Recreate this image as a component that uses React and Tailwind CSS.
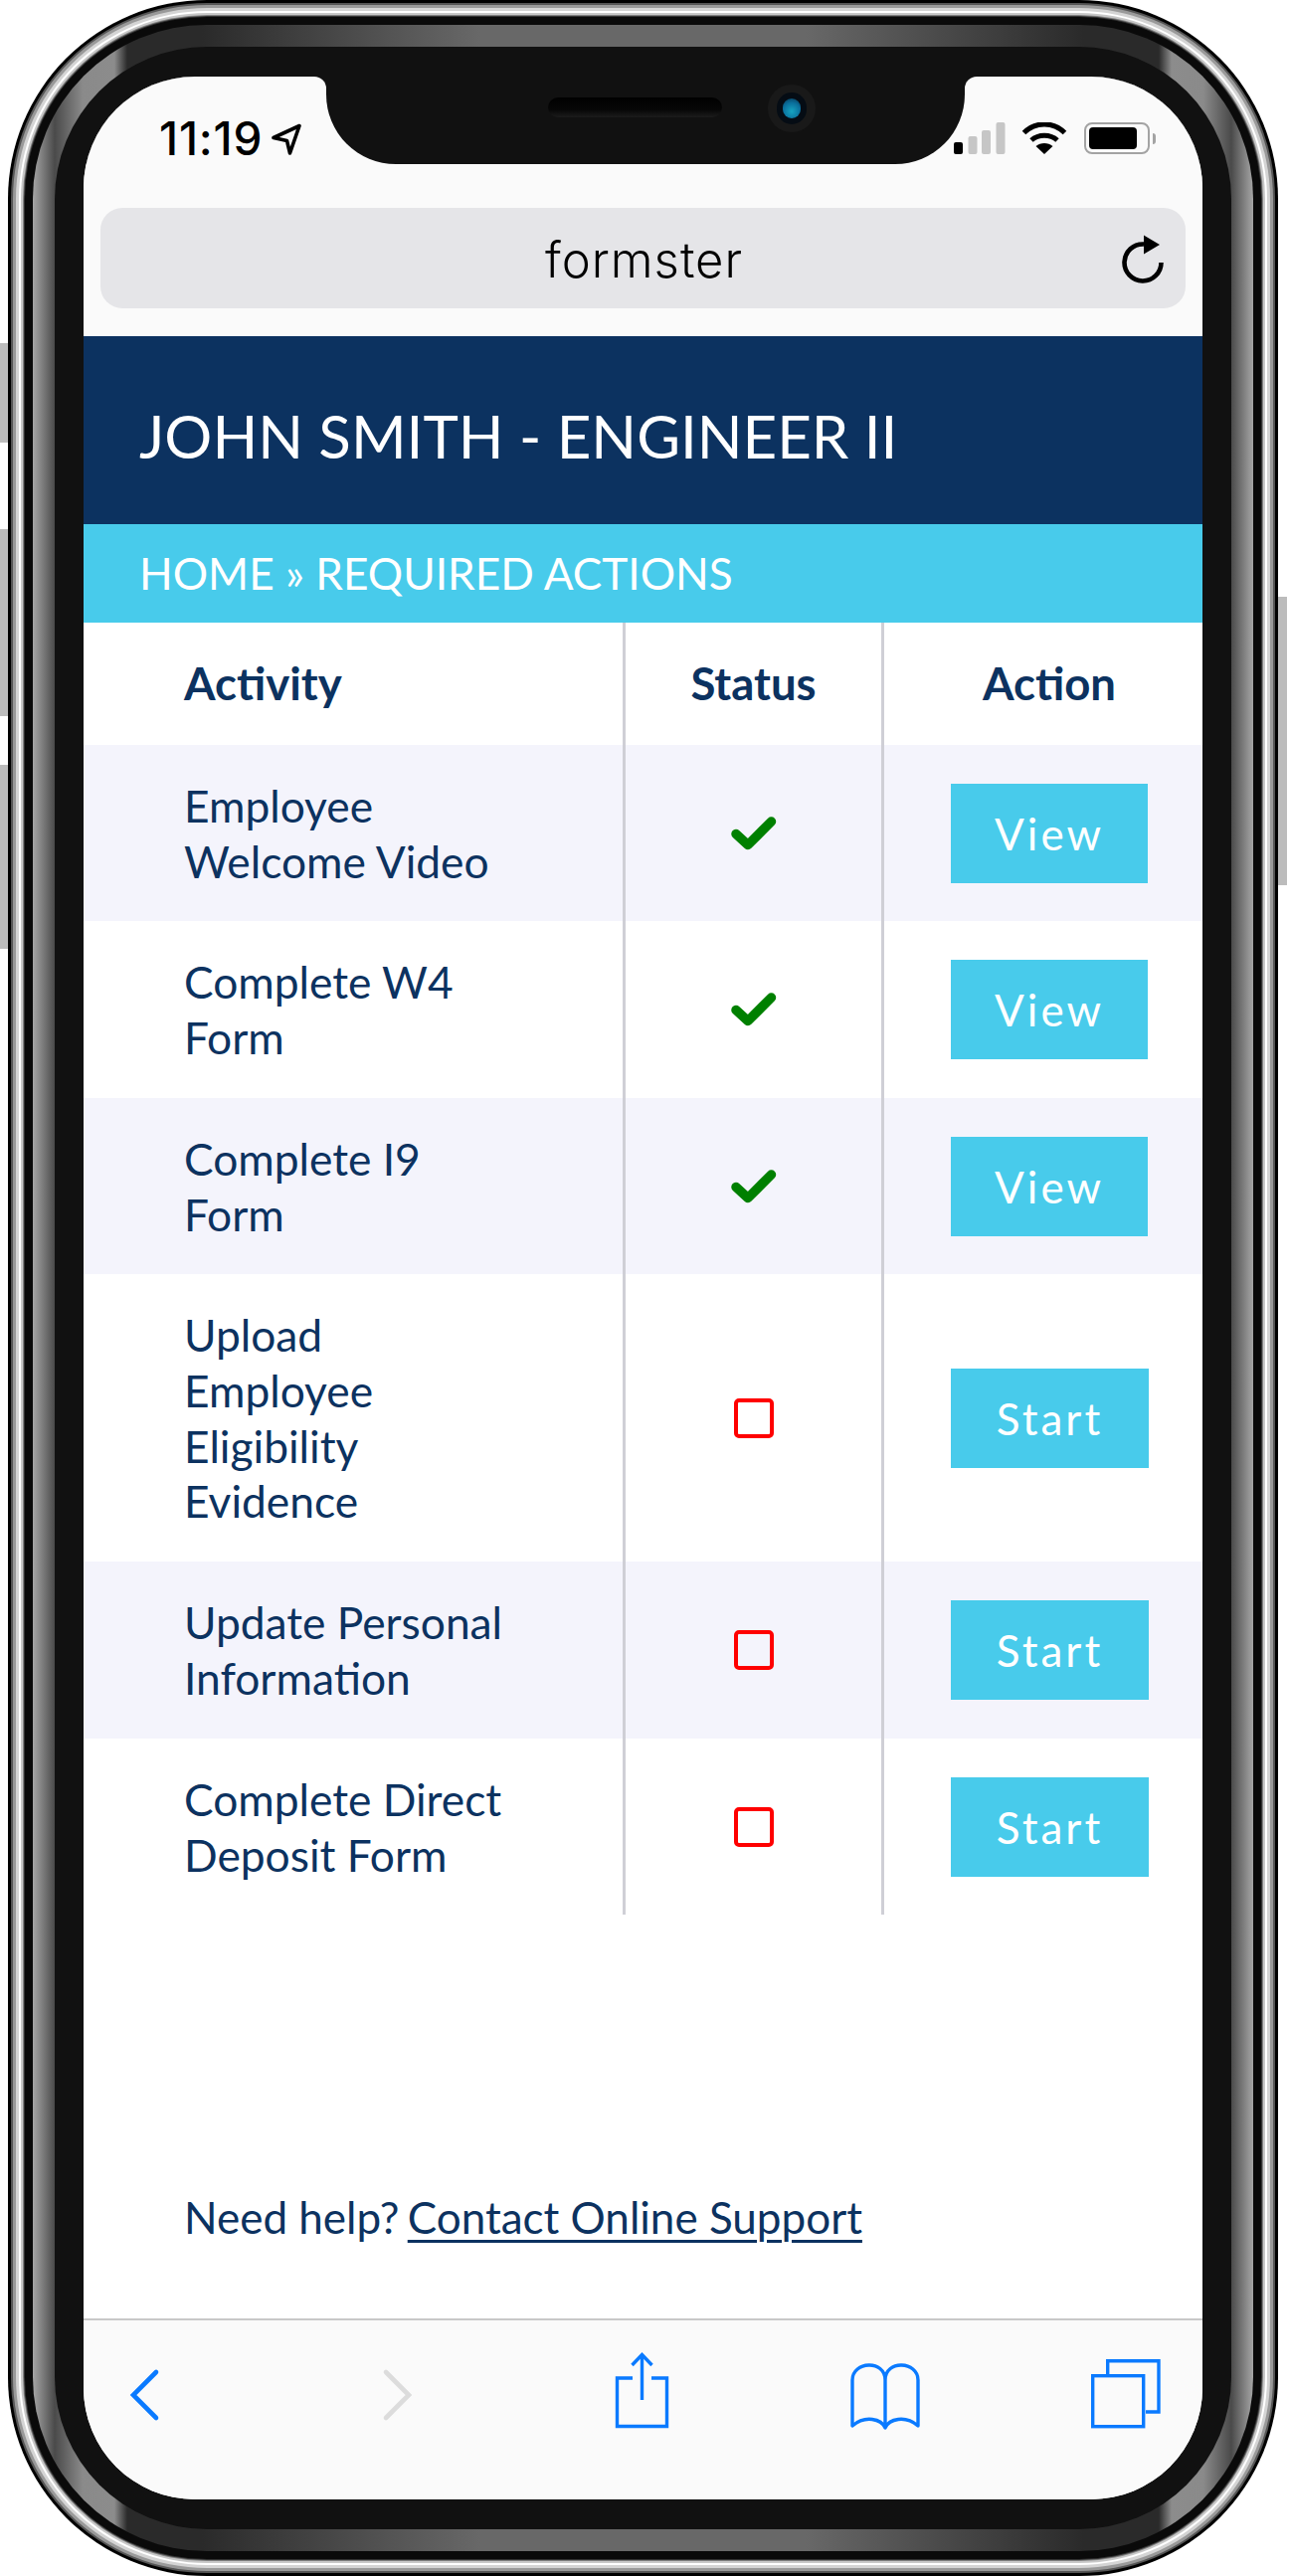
const rows = [
  { l: ['Employee', 'Welcome Video'], done: true, h: 'h-[177px]', bg: 'bg-[#f4f4fc]' },
  { l: ['Complete W4', 'Form'], done: true, h: 'h-[178px]', bg: 'bg-white' },
  { l: ['Complete I9', 'Form'], done: true, h: 'h-[177px]', bg: 'bg-[#f4f4fc]' },
  { l: ['Upload', 'Employee', 'Eligibility', 'Evidence'], done: false, h: 'h-[289px]', bg: 'bg-white' },
  { l: ['Update Personal', 'Information'], done: false, h: 'h-[178px]', bg: 'bg-[#f4f4fc]' },
  { l: ['Complete Direct', 'Deposit Form'], done: false, h: 'h-[177px]', bg: 'bg-white' },
];

const Check = () => (
  <svg width="46" height="36" viewBox="0 0 46 36" fill="none">
    <path d="M5 18.5 L17 29.5 L40.5 6" stroke="#008000" strokeWidth="9.5" strokeLinejoin="round" strokeLinecap="round" />
  </svg>
);

function Row({ r }) {
  return (
    <div className={`grid grid-cols-[542px_260px_1fr] ${r.h} ${r.bg}`}>
      <div className="flex flex-col justify-center pl-[101px] text-[44.3px] leading-[55.6px]">
        {r.l.map((t) => (
          <div key={t}>{t}</div>
        ))}
      </div>
      <div className="flex items-center justify-center border-l-[3px] border-[#cfcfd6]">
        {r.done ? <Check /> : <div className="h-[40px] w-[40px] rounded-[5px] border-[4px] border-[#ff0000]" />}
      </div>
      <div className="flex items-center border-l-[3px] border-[#cfcfd6] pl-[67px]">
        <div className={`flex h-[100px] items-center justify-center bg-[#48cbeb] text-[44px] tracking-[3px] text-white ${r.done ? 'w-[198px]' : 'w-[199px]'}`}>
          {r.done ? 'View' : 'Start'}
        </div>
      </div>
    </div>
  );
}

function StatusBar() {
  return (
    <div className="flex h-[88px] bg-[#111111]">
      <div className="flex w-[244px] items-start rounded-tr-[12px] bg-[#fafafa] pl-[76px] pt-[36px]">
        <span className="font-['Inter',sans-serif] text-[46px] font-medium leading-[52px] tracking-[0.8px] text-black">11:19</span>
        <svg className="ml-[9px] mt-[11px]" width="30" height="32" viewBox="0 0 30 32" fill="none">
          <path d="M2 14.5 L28 2.5 L18.5 30 L15.5 17.5 Z" stroke="#000" strokeWidth="3.6" strokeLinejoin="round" />
        </svg>
      </div>
      <div className="bg-[#fafafa]">
        <div className="flex h-[88px] w-[642px] items-start rounded-b-[70px] bg-[#111111] pl-[223px]">
          <div className="mt-[21px] h-[20px] w-[175px] rounded-full bg-[linear-gradient(180deg,#000000,#060606_60%,#1c1c1c)]" />
          <div className="ml-[46px] mt-[8px] flex h-[48px] w-[48px] items-center justify-center rounded-full bg-[#191919]">
            <div className="flex h-[32px] w-[30px] items-center justify-center rounded-full bg-[#050c14]">
              <div className="h-[20px] w-[18px] rounded-full bg-[radial-gradient(circle_at_50%_65%,#16a3c0,#0a6f9c_55%,#07324e)]" />
            </div>
          </div>
        </div>
      </div>
      <div className="flex flex-1 items-start rounded-tl-[12px] bg-[#fafafa] pt-[46px]">
        <svg className="relative z-10 -ml-[11px]" width="52" height="32" viewBox="0 0 52 32">
          <rect x="0" y="20" width="9" height="12" rx="2" fill="#000" />
          <rect x="14.5" y="14" width="9" height="18" rx="2" fill="#c6c6c6" />
          <rect x="28" y="8" width="9" height="24" rx="2" fill="#c6c6c6" />
          <rect x="42.5" y="0" width="9" height="32" rx="2" fill="#c6c6c6" />
        </svg>
        <svg className="ml-[16px]" width="46" height="32" viewBox="0 0 46 32" fill="none">
          <path d="M2.5 10.5 C14 -1 32 -1 43.5 10.5" stroke="#000" strokeWidth="5" />
          <path d="M10 18 C17 11.5 29 11.5 36 18" stroke="#000" strokeWidth="5" />
          <path d="M23 32 L14.5 24 C19 20 27 20 31.5 24 Z" fill="#000" />
        </svg>
        <div className="ml-[17px] flex h-[32px] w-[66px] items-center rounded-[8px] border-[2px] border-[#a3a3a3] p-[3px]">
          <div className="h-full w-[48px] rounded-[4px] bg-black" />
        </div>
        <div className="ml-[3px] mt-[11px] h-[11px] w-[3px] rounded-r-[3px] bg-[#a3a3a3]" />
      </div>
    </div>
  );
}

export default function App() {
  return (
    <div className="h-[2590px] w-[1296px] bg-white font-['Lato',sans-serif] text-[#0c3260]">
      <div className="flex">
        <div className="flex w-[8px] flex-col pt-[345px]">
          <div className="h-[100px] bg-[#bcbcbc]" />
          <div className="mt-[87px] h-[188px] bg-[#bcbcbc]" />
          <div className="mt-[49px] h-[185px] bg-[#bcbcbc]" />
        </div>
        <div className="h-[2590px] w-[1277px] rounded-[200px] bg-[#000000] p-[3px]">
          <div className="h-full rounded-[197px] bg-[#555555] p-[2px]">
            <div className="h-full rounded-[195px] bg-[#999999] p-[3px]">
              <div className="h-full rounded-[192px] bg-[#d4d4d4] p-[3px]">
                <div className="h-full rounded-[189px] bg-[#ffffff] p-[2px]">
                  <div className="h-full rounded-[187px] bg-[#c8c8c8] p-[2px]">
                    <div className="h-full rounded-[185px] bg-[#808080] p-[1px]">
                      <div className="h-full rounded-[184px] bg-[#333333] p-[1px]">
                        <div className="h-full rounded-[183px] bg-[#0a0a0a] p-[8px]">
                          <div className="h-full rounded-[175px] bg-[linear-gradient(90deg,#a6a6a6_0px,#4a4a4a_22px,#8a8a8a_50px,#8c8c8c_82px,#2a2a2a_95px,#2a2a2a_170px,#686868_450px,#686868_calc(100%_-_450px),#2a2a2a_calc(100%_-_170px),#2a2a2a_calc(100%_-_95px),#8c8c8c_calc(100%_-_82px),#8a8a8a_calc(100%_-_50px),#4a4a4a_calc(100%_-_22px),#a6a6a6_100%)] p-[22px]">
                            <div className="h-full rounded-[153px] bg-[#111111] px-[29px] pb-[30px] pt-[30px]">
                              <div className="flex h-full flex-col overflow-hidden rounded-[112px] bg-white">
                                <StatusBar />
                                <div className="flex h-[173px] items-start bg-[#fafafa] px-[17px] pt-[44px]">
                                  <div className="flex h-[101px] w-full items-center rounded-[22px] bg-[#e5e5e8] pl-[447px] pr-[20px]">
                                    <span className="pt-[4px] font-['Inter',sans-serif] text-[49px] font-light tracking-[1px] text-black">formster</span>
                                    <svg className="ml-auto" width="44" height="50" viewBox="0 0 44 50" fill="none">
                                      <path d="M22 10.5 A18.5 18.5 0 1 0 39.5 29" stroke="#000" strokeWidth="4.6" />
                                      <path d="M22 1.5 L38 11 L22 20.5 Z" fill="#000" />
                                    </svg>
                                  </div>
                                </div>
                                <div className="flex h-[189px] items-center bg-[#0c3260] pl-[56px] pt-[10px] text-[60px] text-white">JOHN SMITH - ENGINEER II</div>
                                <div className="flex h-[99px] items-center bg-[#48cbeb] pl-[56px] text-[44.2px] text-white">HOME » REQUIRED ACTIONS</div>
                                <div className="grid h-[123px] grid-cols-[542px_260px_1fr] bg-white text-[45.5px] font-bold">
                                  <div className="flex items-center pl-[101px]">Activity</div>
                                  <div className="flex items-center justify-center border-l-[3px] border-[#cfcfd6]">Status</div>
                                  <div className="flex items-center border-l-[3px] border-[#cfcfd6] pl-[67px]"><span className="w-[198px] text-center">Action</span></div>
                                </div>
                                {rows.map((r) => (
                                  <Row key={r.l.join()} r={r} />
                                ))}
                                <div className="flex h-[406px] items-start bg-white pl-[101px] pt-[277px] text-[44px] leading-[55.6px]">
                                  <span>Need help? <span className="-ml-[3px] underline decoration-[3px] underline-offset-[6px]">Contact Online Support</span></span>
                                </div>
                                <div className="flex flex-1 items-start border-t-[2px] border-[#c8c8c8] bg-[#fafafa] pl-[21px] pt-[31px] text-[#0a7aff]">
                                  <svg width="80" height="80" viewBox="0 0 80 80" fill="none">
                                    <path d="M52 21 L29 44 L52 67" stroke="#0a7aff" strokeWidth="4.6" strokeLinecap="round" />
                                  </svg>
                                  <svg className="ml-[175px]" width="80" height="80" viewBox="0 0 80 80" fill="none">
                                    <path d="M28 21 L51 44 L28 67" stroke="#dcdcdc" strokeWidth="4.6" strokeLinecap="round" />
                                  </svg>
                                  <svg className="ml-[165px]" width="80" height="80" viewBox="0 0 80 80" fill="none">
                                    <path d="M31 27 H15.5 V75.5 H65.5 V27 H50" stroke="#0a7aff" strokeWidth="3.4" />
                                    <path d="M40.5 3.5 V49" stroke="#0a7aff" strokeWidth="3.4" />
                                    <path d="M30.5 14 L40.5 3.5 L50.5 14" stroke="#0a7aff" strokeWidth="3.4" />
                                  </svg>
                                  <svg className="ml-[165px]" width="80" height="80" viewBox="0 0 80 80" fill="none">
                                    <path d="M40 77 C36 68 20 64 7 75 V29 C7 10 40 8 40 29 C40 8 73 10 73 29 V75 C60 64 44 68 40 77 Z M40 29 V77" stroke="#0a7aff" strokeWidth="3.4" strokeLinejoin="round" />
                                  </svg>
                                  <svg className="ml-[162px]" width="80" height="80" viewBox="0 0 80 80" fill="none">
                                    <rect x="6.7" y="24.7" width="51" height="51" stroke="#0a7aff" strokeWidth="3.4" />
                                    <path d="M21.7 23 V9.7 H73 V61 H60" stroke="#0a7aff" strokeWidth="3.4" />
                                  </svg>
                                </div>
                              </div>
                            </div>
                          </div>
                        </div>
                      </div>
                    </div>
                  </div>
                </div>
              </div>
            </div>
          </div>
        </div>
        <div className="flex w-[11px] flex-col pt-[600px]">
          <div className="h-[290px] w-[9px] bg-[#bcbcbc]" />
        </div>
      </div>
    </div>
  );
}
